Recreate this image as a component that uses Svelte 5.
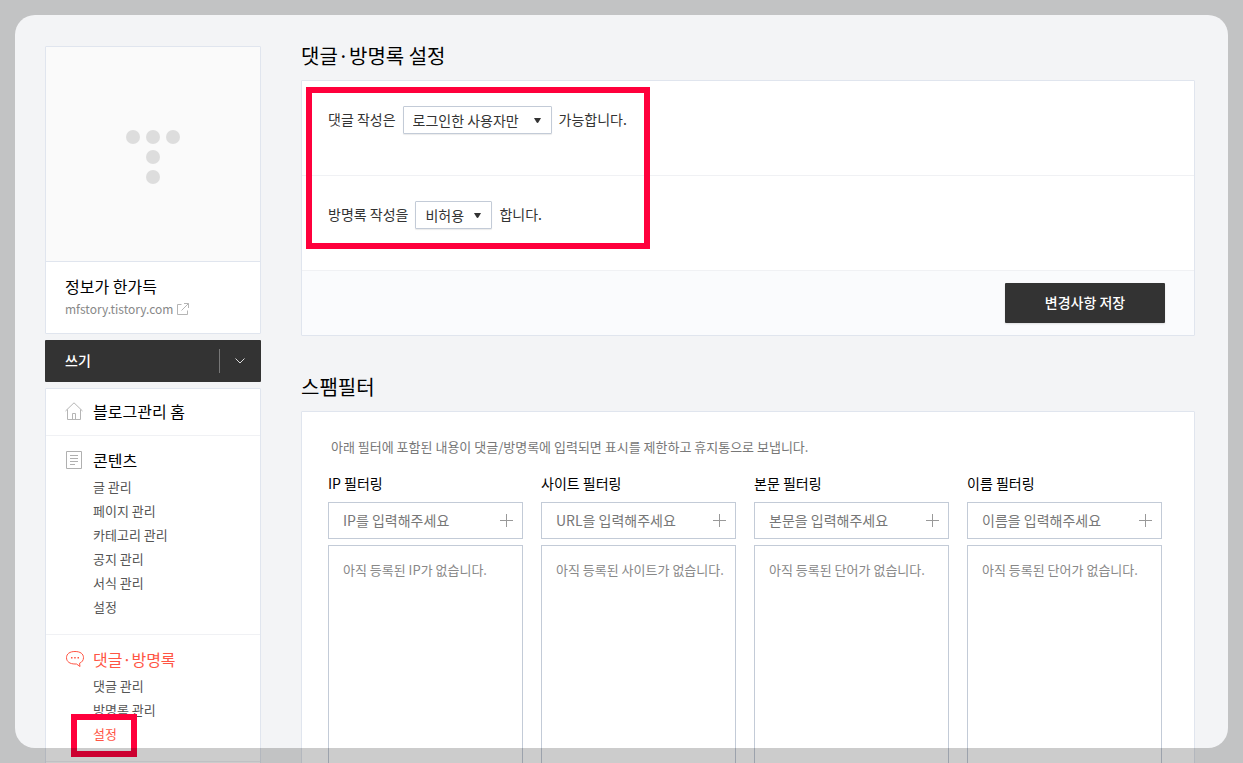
<script lang="ts">
	interface MenuItem {
		text: string;
		active?: boolean;
		marked?: boolean;
	}

	interface Filter {
		id: string;
		label: string;
		placeholder: string;
		empty: string;
	}

	const contentMenu: MenuItem[] = [
		{ text: '글 관리' },
		{ text: '페이지 관리' },
		{ text: '카테고리 관리' },
		{ text: '공지 관리' },
		{ text: '서식 관리' },
		{ text: '설정' }
	];

	const commentMenu: MenuItem[] = [
		{ text: '댓글 관리' },
		{ text: '방명록 관리' },
		{ text: '설정', active: true, marked: true }
	];

	const filters: Filter[] = [
		{ id: 'ip', label: 'IP 필터링', placeholder: 'IP를 입력해주세요', empty: '아직 등록된 IP가 없습니다.' },
		{ id: 'site', label: '사이트 필터링', placeholder: 'URL을 입력해주세요', empty: '아직 등록된 사이트가 없습니다.' },
		{ id: 'body', label: '본문 필터링', placeholder: '본문을 입력해주세요', empty: '아직 등록된 단어가 없습니다.' },
		{ id: 'name', label: '이름 필터링', placeholder: '이름을 입력해주세요', empty: '아직 등록된 단어가 없습니다.' }
	];

	let commentPermission = $state('login');
	let guestbookPermission = $state('deny');
</script>

{#snippet arrow()}
	<svg class="select-arrow" width="7" height="5" viewBox="0 0 7 5" aria-hidden="true">
		<path d="M0 0h7L4.5 4.2a1.2 1.2 0 0 1-2 0z" fill="#333" />
	</svg>
{/snippet}

{#snippet menuItems(items: MenuItem[])}
	<ul class="menu-list">
		{#each items as item}
			<li class="menu-item" class:marked={item.marked}>
				<a href="#menu" class:active={item.active}>{item.text}</a>
			</li>
		{/each}
	</ul>
{/snippet}

<div class="page">
	<aside class="sidebar">
		<section class="profile">
			<div class="profile-image">
				<svg width="54" height="54" viewBox="0 0 54 54" fill="#ddd" aria-hidden="true">
					<circle cx="7" cy="7" r="7" />
					<circle cx="27" cy="7" r="7" />
					<circle cx="47" cy="7" r="7" />
					<circle cx="27" cy="27" r="7" />
					<circle cx="27" cy="47" r="7" />
				</svg>
			</div>
			<div class="profile-info">
				<strong class="blog-name">정보가 한가득</strong>
				<a class="blog-link" href="#blog">
					mfstory.tistory.com
					<svg width="12" height="12" viewBox="0 0 12 12" fill="none" stroke="#b5b5b5" aria-hidden="true">
						<path d="M4.5 1.5h-4v10h10v-4M7 .5h4.5V5M11.5.5l-7 7" />
					</svg>
				</a>
			</div>
		</section>

		<div class="write">
			<button class="write-button" type="button">쓰기</button>
			<button class="write-more" type="button" aria-label="더보기">
				<svg width="10" height="6" viewBox="0 0 10 6" fill="none" stroke="#ddd" aria-hidden="true">
					<path d="M.5.5 5 5 9.5.5" />
				</svg>
			</button>
		</div>

		<nav class="menu">
			<section class="menu-group home">
				<a class="menu-title" href="#home">
					<svg width="18" height="18" viewBox="0 0 18 18" fill="none" stroke="#b5b5b5" aria-hidden="true">
						<path d="M.5 9 9 .8 17.5 9M2.5 7.5v10h13v-10M7.5 17.5v-6h3v6" />
					</svg>
					블로그관리 홈
				</a>
			</section>
			<section class="menu-group">
				<a class="menu-title" href="#contents">
					<svg width="18" height="18" viewBox="0 0 18 18" fill="none" stroke="#b0b0b0" aria-hidden="true">
						<path d="M1.5.5h15v17h-15zM5 4.5h8M5 7.5h8M5 10.5h8M5 13.5h5" />
					</svg>
					콘텐츠
				</a>
				{@render menuItems(contentMenu)}
			</section>
			<section class="menu-group">
				<a class="menu-title active" href="#comments">
					<svg width="18" height="18" viewBox="-1 0 18 18" overflow="visible" aria-hidden="true">
						<path d="M13.5 13.3c2.500-1 4-3.200 4-5.600 0-3.900-3.300-6.200-8.500-6.200S.5 3.800.5 7.700s3.300 6.300 8.500 6.300h1.500l3.500 2.500z" fill="none" stroke="#ff5544" stroke-linejoin="round" />
						<path d="M5 7h1.500v1.500H5zM8.200 7h1.500v1.500H8.200zM11.500 7H13v1.500h-1.500z" fill="#ff5544" />
					</svg>
					댓글·방명록
				</a>
				{@render menuItems(commentMenu)}
			</section>
		</nav>
	</aside>

	<main class="main">
		<h2>댓글·방명록 설정</h2>
		<form class="panel settings" onsubmit={(e) => e.preventDefault()}>
			<div class="setting-row">
				<label for="comment-permission">댓글 작성은</label>
				<span class="select">
					<select id="comment-permission" bind:value={commentPermission}>
						<option value="login">로그인한 사용자만</option>
						<option value="all">누구나</option>
					</select>
					{@render arrow()}
				</span>
				<span>가능합니다.</span>
			</div>
			<div class="setting-row">
				<label for="guestbook-permission">방명록 작성을</label>
				<span class="select compact">
					<select id="guestbook-permission" bind:value={guestbookPermission}>
						<option value="deny">비허용</option>
						<option value="allow">허용</option>
					</select>
					{@render arrow()}
				</span>
				<span>합니다.</span>
			</div>
			<div class="panel-footer">
				<button class="save-button" type="submit">변경사항 저장</button>
			</div>
			<div class="highlight"></div>
		</form>

		<h2>스팸필터</h2>
		<section class="panel spam">
			<p class="description">아래 필터에 포함된 내용이 댓글/방명록에 입력되면 표시를 제한하고 휴지통으로 보냅니다.</p>
			<div class="filters">
				{#each filters as filter}
					<div class="filter">
						<label for="filter-{filter.id}">{filter.label}</label>
						<div class="filter-input">
							<input id="filter-{filter.id}" type="text" placeholder={filter.placeholder} />
							<button type="button" aria-label="추가">
								<svg width="13" height="13" viewBox="0 0 13 13" stroke="#999" aria-hidden="true">
									<path d="M6.5 0v13M0 6.5h13" />
								</svg>
							</button>
						</div>
						<div class="filter-list">{filter.empty}</div>
					</div>
				{/each}
			</div>
		</section>
	</main>
</div>

<div class="frame"></div>

<style>
	:global(body) {
		background: #f3f4f6;
		font-family: 'Noto Sans CJK KR', sans-serif;
		font-size: 14px;
		color: #333;
	}

	a {
		color: inherit;
		text-decoration: none;
	}

	button,
	input,
	select {
		margin: 0;
		padding: 0;
		border: 0;
		background: none;
		color: inherit;
		font: inherit;
	}

	.page {
		display: flex;
		gap: 40px;
		height: 100vh;
		box-sizing: border-box;
		padding: 42px 48px 0 45px;
		overflow: hidden;
	}

	/* sidebar */
	.sidebar {
		flex: 0 0 216px;
		display: flex;
		flex-direction: column;
		gap: 6px;
		padding-top: 4px;
	}

	.profile {
		flex-shrink: 0;
		border: 1px solid #e0e5ee;
		border-radius: 1px;
		background: #fff;
	}

	.profile-image {
		display: flex;
		align-items: center;
		justify-content: center;
		height: 214px;
		border-bottom: 1px solid #e0e5ee;
		background: #fafafa;
	}

	.profile-image svg {
		padding-top: 6px;
	}

	.profile-info {
		padding: 12px 19px 13px;
	}

	.blog-name {
		display: block;
		font-size: 16px;
		font-weight: 400;
		line-height: 24px;
		color: #000;
	}

	.blog-link {
		display: flex;
		align-items: center;
		gap: 4px;
		font-size: 12px;
		line-height: 22px;
		color: #888;
	}

	.write {
		flex-shrink: 0;
		display: flex;
		align-items: center;
		height: 42px;
		border-radius: 1px;
		background: #333;
		color: #fff;
	}

	.write-button {
		flex: 1;
		padding: 0 0 2px 20px;
		font-weight: 500;
		line-height: 40px;
		text-align: left;
	}

	.write-more {
		display: flex;
		align-items: center;
		justify-content: center;
		width: 42px;
		height: 24px;
		padding-right: 2px;
		border-left: 1px solid #777;
	}

	.menu {
		flex-shrink: 0;
		padding-bottom: 46px;
		border: 1px solid #e0e5ee;
		border-radius: 1px;
		background: #fff;
	}

	.menu-group {
		padding: 12px 19px 15px;
		border-bottom: 1px solid #f0f1f4;
	}

	.menu-group.home {
		padding: 10px 19px 12px;
	}

	.menu-title {
		display: flex;
		align-items: center;
		gap: 10px;
		font-size: 16px;
		line-height: 24px;
		color: #000;
	}

	.menu-list {
		margin: 0;
		padding: 3px 0 0 28px;
		list-style: none;
	}

	.menu-item {
		position: relative;
		font-size: 13px;
		line-height: 24px;
		color: #555;
	}

	.active {
		color: #ff5544;
	}

	/* red guide boxes drawn over the page */
	.highlight,
	.marked::after {
		position: absolute;
		box-sizing: border-box;
		border: 6px solid #ff003c;
		pointer-events: none;
	}

	.highlight {
		top: 6px;
		left: 4px;
		width: 344px;
		height: 162px;
	}

	.marked::after {
		content: '';
		top: -8px;
		left: -22px;
		width: 66px;
		height: 43px;
	}

	/* main */
	.main {
		flex: 1;
		min-width: 0;
	}

	h2 {
		margin: 0 0 10px;
		font-size: 20px;
		font-weight: 400;
		line-height: 28px;
		color: #000;
	}

	.panel {
		border: 1px solid #e0e5ee;
		border-radius: 1px;
		background: #fff;
	}

	.settings {
		position: relative;
		margin-bottom: 37px;
	}

	.setting-row {
		display: flex;
		gap: 7px;
		padding: 25px 26px 41px;
		border-bottom: 1px solid #f0f1f4;
		line-height: 26px;
	}

	.select {
		position: relative;
		display: flex;
	}

	.select select {
		appearance: none;
		box-sizing: border-box;
		height: 28px;
		padding: 0 31px 2px 9px;
		border: 1px solid #c3cbd7;
		border-radius: 1px;
		background: #fff;
		box-shadow: 0 1px 1px rgba(0, 0, 0, 0.08);
	}

	.select.compact select {
		padding-right: 27px;
	}

	.select-arrow {
		position: absolute;
		top: 12px;
		right: 11px;
		pointer-events: none;
	}

	.panel-footer {
		display: flex;
		justify-content: flex-end;
		padding: 12px 29px;
		background: #fafbfd;
	}

	.save-button {
		width: 160px;
		height: 40px;
		padding-bottom: 2px;
		border-radius: 1px;
		background: #333;
		box-shadow: 0 1px 2px rgba(0, 0, 0, 0.12);
		color: #fff;
		font-weight: 500;
	}

	.spam {
		padding: 25px 32px 30px 26px;
	}

	.description {
		margin: 0;
		padding-left: 3px;
		font-size: 13px;
		line-height: 20px;
		color: #777;
	}

	.filters {
		display: grid;
		grid-template-columns: repeat(4, 1fr);
		gap: 18px;
		padding-top: 15px;
	}

	.filter {
		display: flex;
		flex-direction: column;
		gap: 6px;
		min-width: 0;
	}

	.filter label {
		padding-bottom: 2px;
		line-height: 22px;
		color: #000;
	}

	.filter-input {
		display: flex;
		align-items: center;
		height: 35px;
		border: 1px solid #c3cbd7;
	}

	.filter-input input {
		flex: 1;
		min-width: 0;
		padding: 0 0 2px 14px;
		outline: none;
	}

	.filter-input input::placeholder {
		color: #777;
		opacity: 1;
	}

	.filter-input button {
		display: flex;
		padding: 9px;
	}

	.filter-list {
		height: 280px;
		padding: 14px;
		border: 1px solid #c3cbd7;
		font-size: 13px;
		line-height: 20px;
		white-space: nowrap;
		color: #888;
	}

	/* dimmed edge with a rounded window over the page */
	.frame {
		position: fixed;
		inset: 15px;
		border-radius: 20px;
		box-shadow: 0 0 0 40px rgba(0, 0, 0, 0.2);
		pointer-events: none;
	}
</style>
